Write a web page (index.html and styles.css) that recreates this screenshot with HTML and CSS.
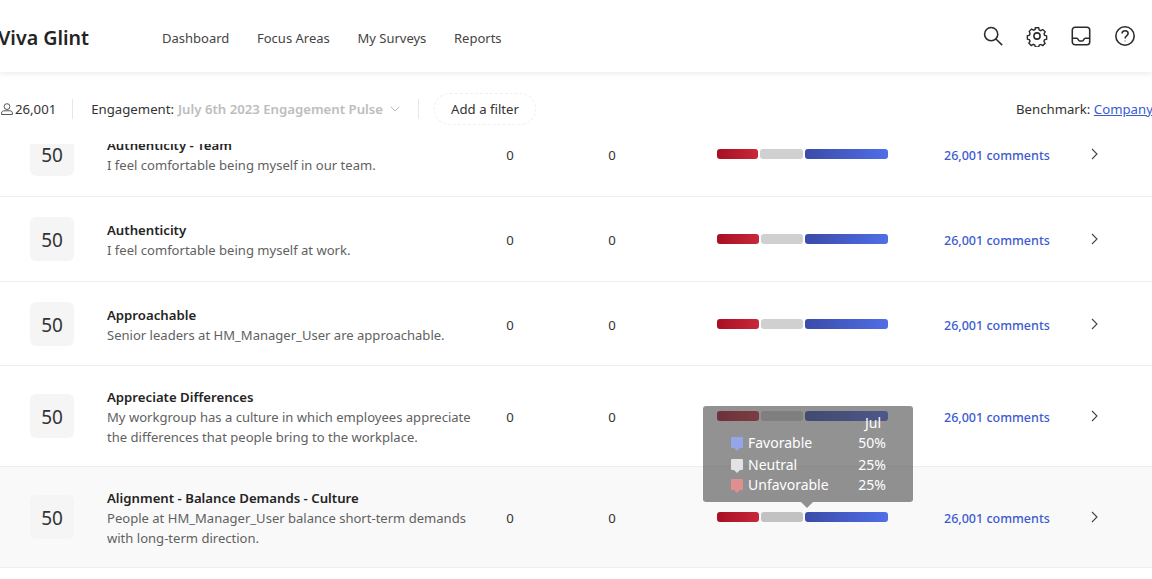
FILE: index.html
```html
<!DOCTYPE html>
<html lang="en">
<head>
  <meta charset="UTF-8" />
  <title>Viva Glint</title>
  <link rel="stylesheet" href="styles.css">
</head>
<body>

  <header class="topbar">
    <div class="brand">Viva Glint</div>
    <nav class="nav">
      <a>Dashboard</a>
      <a>Focus Areas</a>
      <a>My Surveys</a>
      <a>Reports</a>
    </nav>
    <div class="tools">
      <svg class="tool" viewBox="0 0 24 24"><circle cx="10" cy="10" r="7.2"/><path d="M15.2 15.2 22 22"/></svg>
      <svg class="tool" viewBox="0 0 24 24"><circle cx="12" cy="12" r="3.4"/><path d="M10 2.6h4l.7 2.8 1.9.8 2.5-1.4 2.8 2.8-1.4 2.5.6 1.7 2.6.8v3.9l-2.6.8-.7 1.8 1.4 2.4-2.8 2.8-2.4-1.4-1.9.8-.7 2.3h-4l-.7-2.4-1.9-.8-2.4 1.4-2.8-2.8 1.4-2.4-.7-1.8-2.6-.8v-3.9l2.6-.8.7-1.8L2.6 7l2.8-2.8 2.4 1.4 1.9-.8z" transform="translate(1.2 .6) scale(.9)"/></svg>
      <svg class="tool" viewBox="0 0 24 24"><rect x="2.5" y="2.5" width="19" height="19" rx="3"/><path d="M2.5 14.5h5c1.5 0 1.5 3 3 3h3c1.5 0 1.5-3 3-3h5"/></svg>
      <svg class="tool" viewBox="0 0 24 24"><circle cx="12" cy="12" r="10"/><path d="M8.8 9.4c0-4.2 6.6-4.2 6.6 0 0 2.6-3.3 2.5-3.3 5.2"/><path class="dot" d="M12.1 17.2v.6"/></svg>
    </div>
  </header>

  <div class="filters">
    <svg class="person" viewBox="0 0 12 12"><circle cx="6" cy="3.6" r="2.9"/><path d="M.6 11.5V10c0-1.3 1-2.2 2.2-2.2h6.4c1.2 0 2.2.9 2.2 2.2v1.5z"/></svg>
    <span class="count">26,001</span>
    <span class="divider"></span>
    <span class="label">Engagement:</span>
    <span class="survey">July 6th 2023 Engagement Pulse</span>
    <svg class="caret" viewBox="0 0 10 6"><path d="M.7.7 5 5 9.3.7"/></svg>
    <span class="divider second"></span>
    <button class="add-filter">Add a filter</button>
    <div class="benchmark">Benchmark: <a>Company</a></div>
  </div>

  <main class="list">

    <div class="row">
      <div class="score">50</div>
      <div class="text"><h3>Authenticity - Team</h3><p>I feel comfortable being myself in our team.</p></div>
      <div class="num">0</div>
      <div class="num">0</div>
      <div class="bar-cell"><div class="bar"><span class="red" style="width:41px"></span><span class="gray" style="width:43px"></span><span class="blue" style="width:83px"></span></div></div>
      <a class="comments">26,001 comments</a>
      <svg class="chevron" viewBox="0 0 8 12"><path d="M1 1l5 5-5 5"/></svg>
    </div>

    <div class="row">
      <div class="score">50</div>
      <div class="text"><h3>Authenticity</h3><p>I feel comfortable being myself at work.</p></div>
      <div class="num">0</div>
      <div class="num">0</div>
      <div class="bar-cell"><div class="bar"><span class="red" style="width:42px"></span><span class="gray" style="width:42px"></span><span class="blue" style="width:83px"></span></div></div>
      <a class="comments">26,001 comments</a>
      <svg class="chevron" viewBox="0 0 8 12"><path d="M1 1l5 5-5 5"/></svg>
    </div>

    <div class="row short">
      <div class="score">50</div>
      <div class="text"><h3>Approachable</h3><p>Senior leaders at HM_Manager_User are approachable.</p></div>
      <div class="num">0</div>
      <div class="num">0</div>
      <div class="bar-cell"><div class="bar"><span class="red" style="width:42px"></span><span class="gray" style="width:42px"></span><span class="blue" style="width:83px"></span></div></div>
      <a class="comments">26,001 comments</a>
      <svg class="chevron" viewBox="0 0 8 12"><path d="M1 1l5 5-5 5"/></svg>
    </div>

    <div class="row tall">
      <div class="score">50</div>
      <div class="text"><h3>Appreciate Differences</h3><p>My workgroup has a culture in which employees appreciate the differences that people bring to the workplace.</p></div>
      <div class="num">0</div>
      <div class="num">0</div>
      <div class="bar-cell"><div class="bar"><span class="red" style="width:42px"></span><span class="gray" style="width:42px"></span><span class="blue" style="width:83px"></span></div></div>
      <a class="comments">26,001 comments</a>
      <svg class="chevron" viewBox="0 0 8 12"><path d="M1 1l5 5-5 5"/></svg>
    </div>

    <div class="row tall hovered">
      <div class="score">50</div>
      <div class="text"><h3>Alignment - Balance Demands - Culture</h3><p>People at HM_Manager_User balance short-term demands with long-term direction.</p></div>
      <div class="num">0</div>
      <div class="num">0</div>
      <div class="bar-cell">
        <div class="bar"><span class="red" style="width:42px"></span><span class="gray" style="width:42px"></span><span class="blue" style="width:83px"></span></div>
        <div class="tooltip">
          <div class="tip-month">Jul</div>
          <div class="tip-line fav"><i></i><span>Favorable</span><b>50%</b></div>
          <div class="tip-line neu"><i></i><span>Neutral</span><b>25%</b></div>
          <div class="tip-line unf"><i></i><span>Unfavorable</span><b>25%</b></div>
        </div>
      </div>
      <a class="comments">26,001 comments</a>
      <svg class="chevron" viewBox="0 0 8 12"><path d="M1 1l5 5-5 5"/></svg>
    </div>

  </main>

</body>
</html>
```

FILE: styles.css
```css
* {
  margin: 0;
  padding: 0;
  box-sizing: border-box;
}

html, body {
  height: 100%;
  overflow: hidden;
}

body {
  font-family: 'Noto Sans', 'Open Sans', sans-serif;
  font-size: 13.2px;
  background: #fff;
  color: #333;
}

/* Top bar */
.topbar {
  position: relative;
  z-index: 3;
  height: 72px;
  background: #fff;
  display: flex;
  align-items: center;
  box-shadow: 0 1px 6px rgba(0, 0, 0, 0.1);
}

.brand {
  width: 162px;
  margin-left: -2px;
  font-size: 19.6px;
  font-weight: 600;
  color: #242424;
  flex: none;
  padding-top: 2px;
}

.nav {
  display: flex;
  gap: 27.7px;
  padding-left: 2px;
  color: #444;
  font-size: 13px;
  padding-top: 4px;
}

.tools {
  margin-left: auto;
  display: flex;
  gap: 22px;
  padding-right: 16px;
}

.tool {
  width: 22px;
  height: 22px;
  fill: none;
  stroke: #2b2b2b;
  stroke-width: 1.7;
}

/* Filters */
.filters {
  position: relative;
  z-index: 2;
  height: 72px;
  background: #fff;
  display: flex;
  align-items: center;
  padding-top: 2px;
  padding-left: 1px;
  white-space: nowrap;
}

.person {
  width: 12px;
  height: 12px;
  fill: none;
  stroke: #444;
  stroke-width: 0.9;
}

.count {
  margin-left: 2px;
  color: #333;
}

.divider {
  width: 1px;
  height: 20px;
  background: #e6e6e6;
  margin: 0 18px 0 16px;
}

.divider.second {
  margin: 0 15px 0 18px;
}

.label {
  color: #333;
}

.survey {
  margin-left: 4px;
  font-weight: 600;
  color: #bdbdbd;
}

.caret {
  width: 10px;
  height: 6px;
  margin-left: 7px;
  fill: none;
  stroke: #bdbdbd;
  stroke-width: 1;
}

.add-filter {
  width: 102px;
  height: 32px;
  background: #fff;
  border: 1px dashed #efefef;
  border-radius: 16px;
  font: inherit;
  color: #333;
}

.benchmark {
  margin-left: auto;
  width: 136px;
  color: #333;
}

.benchmark a {
  color: #3b5bd0;
  text-decoration: underline;
}

/* List of questions */
.list {
  margin-top: -32px;
}

.row {
  display: grid;
  grid-template-columns: 77px 370px 66px 138px 263px 136px 1fr;
  align-items: center;
  height: 85px;
  padding-left: 30px;
  border-bottom: 1px solid #eee;
}

.row.short {
  height: 84px;
  padding-top: 1px;
}

.row.tall {
  height: 101px;
}

.row.hovered {
  background: #f9f9f9;
}

.score {
  width: 44px;
  height: 44px;
  padding-top: 2px;
  border-radius: 6px;
  background: #f5f5f5;
  display: flex;
  align-items: center;
  justify-content: center;
  font-size: 19px;
  color: #333;
}

.text {
  line-height: 20px;
  padding-top: 2px;
}

.text h3 {
  font-size: 13.2px;
  font-weight: 600;
  color: #242424;
}

.text p {
  font-size: 13.05px;
  color: #616161;
}

.num {
  text-align: center;
  color: #333;
  padding-top: 1px;
}

.bar-cell {
  position: relative;
  padding-left: 36px;
}

.bar {
  display: flex;
  gap: 2px;
  height: 10px;
}

.bar span {
  border-radius: 3px;
}

.red {
  background: linear-gradient(90deg, #a80f22, #c8283a);
}

.gray {
  background: #d0d0d0;
}

.hovered .gray {
  background: #c2c2c2;
}

.blue {
  background: linear-gradient(90deg, #3b4ba8, #506ee8);
}

.comments {
  color: #3b5bd0;
  font-weight: 500;
  font-size: 12.5px;
  padding-top: 3px;
}

.chevron {
  width: 8px;
  height: 12px;
  margin-left: 11px;
  fill: none;
  stroke: #444;
  stroke-width: 1.1;
}

/* Tooltip */
.tooltip {
  position: absolute;
  left: 22px;
  bottom: 20px;
  width: 210px;
  height: 96px;
  padding: 7px 27px 0 28px;
  border-radius: 3px;
  background: rgba(73, 73, 73, 0.6);
  color: #fff;
  font-size: 14px;
  line-height: 20px;
}

.tooltip::after {
  content: "";
  position: absolute;
  left: 98px;
  top: 96px;
  border: 6px solid transparent;
  border-top-color: rgba(73, 73, 73, 0.6);
  border-bottom: 0;
}

.tip-month {
  text-align: right;
  padding-right: 5px;
  margin-bottom: -1px;
}

.tip-line {
  display: flex;
  align-items: center;
  height: 21px;
}

.tip-line i {
  position: relative;
  width: 12px;
  height: 11px;
  margin-right: 5px;
  border-radius: 1px;
}

.tip-line i::after {
  content: "";
  position: absolute;
  left: 3px;
  top: 11px;
  border: 3px solid transparent;
  border-top-color: inherit;
  border-bottom: 0;
}

.tip-line b {
  margin-left: auto;
  font-weight: 400;
}

.fav i { background: #94a5e8; border-color: #94a5e8; }
.neu { margin-top: 1px; }
.neu i { background: #e3e3e3; border-color: #e3e3e3; }
.unf { margin-top: -1px; }
.unf i { background: #df8f8f; border-color: #df8f8f; }
```
